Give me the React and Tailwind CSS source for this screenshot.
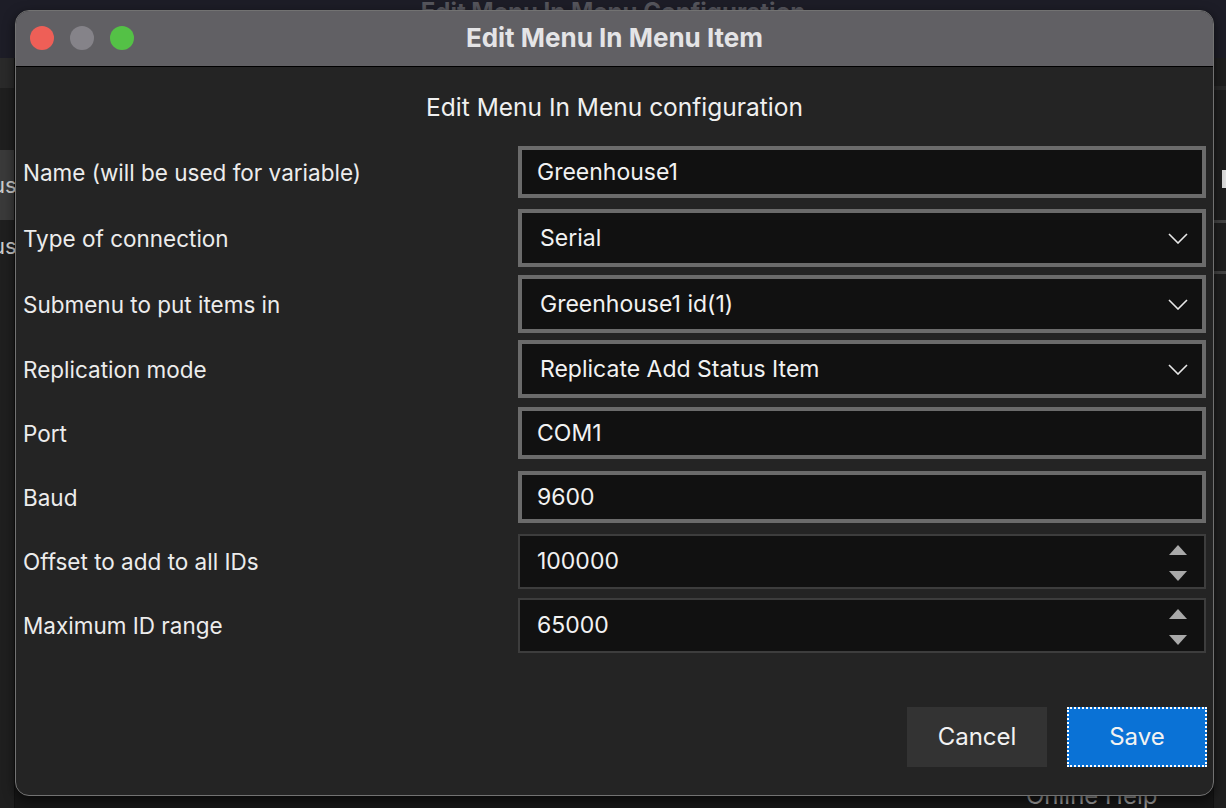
import React from "react";

const rows = [
  { label: "Name (will be used for variable)", value: "Greenhouse1", kind: "text", h: "h-[66px]" },
  { label: "Type of connection", value: "Serial", kind: "combo", h: "h-[66px]" },
  { label: "Submenu to put items in", value: "Greenhouse1 id(1)", kind: "combo", h: "h-[66px]" },
  { label: "Replication mode", value: "Replicate Add Status Item", kind: "combo", h: "h-[64px]" },
  { label: "Port", value: "COM1", kind: "text", h: "h-[64px]" },
  { label: "Baud", value: "9600", kind: "text", h: "h-[64px]" },
  { label: "Offset to add to all IDs", value: "100000", kind: "spin", h: "h-[64px]" },
  { label: "Maximum ID range", value: "65000", kind: "spin", h: "h-[64px]" },
];

function Chevron() {
  return (
    <svg width="20" height="11" viewBox="0 0 20 11" className="shrink-0">
      <polyline points="1,1 10,10 19,1" fill="none" stroke="#e8e8e8" strokeWidth="1.6" />
    </svg>
  );
}

function Spinner() {
  return (
    <div className="flex flex-col items-center gap-[16px] mt-[3px] shrink-0">
      <svg width="18" height="10" viewBox="0 0 18 10">
        <polygon points="9,0 18,10 0,10" fill="#a9a9a9" />
      </svg>
      <svg width="18" height="10" viewBox="0 0 18 10">
        <polygon points="0,0 18,0 9,10" fill="#a9a9a9" />
      </svg>
    </div>
  );
}

function Field({ row }) {
  if (row.kind === "spin") {
    return (
      <div className="flex items-center h-[55px] bg-[#111111] border-2 border-[#3d3d3d] pl-[17px] pr-[17px]">
        <span className="flex-1">{row.value}</span>
        <Spinner />
      </div>
    );
  }
  if (row.kind === "combo") {
    return (
      <div className="flex items-center h-[58px] bg-[#111111] border-4 border-[#6b6b6b] pl-[18px] pr-[14px]">
        <span className="flex-1">{row.value}</span>
        <Chevron />
      </div>
    );
  }
  return (
    <div className="flex items-center h-[52px] bg-[#111111] border-4 border-[#6b6b6b] pl-[15px]">
      <span>{row.value}</span>
    </div>
  );
}

export default function App() {
  return (
    <div
      className="relative w-[1226px] h-[808px] overflow-hidden bg-[#161616] text-[#f2f2f2]"
      style={{ fontFamily: "Inter, 'Liberation Sans', sans-serif" }}
    >
      {/* window behind */}
      <div className="absolute left-0 top-0 w-full h-[58px] bg-[#1d1d27] flex justify-center">
        <span className="text-[24px] font-bold text-[#55555c] -mt-[6px]">
          Edit Menu In Menu Configuration
        </span>
      </div>
      <div className="absolute left-0 top-[58px] w-[15px] h-[750px] bg-[#1f1f1f] border-r border-[#111]">
        <div className="h-[30px] bg-[#2a2a2a]" />
        <div className="mt-[62px] h-[70px] bg-[#3a3a3a] text-[22px] text-[#cfcfcf] flex items-center -ml-[8px]">us</div>
        <div className="mt-[10px] text-[22px] text-[#cfcfcf] -ml-[8px]">us</div>
      </div>
      <div className="absolute right-0 top-[58px] w-[13px] h-[750px] bg-[#1f1f1f] border-l border-[#111]">
        <div className="mt-[28px] h-[4px] bg-[#2a2a2a]" />
        <div className="mt-[80px] ml-[8px] w-[6px] h-[18px] bg-[#dcdcdc]" />
        <div className="mt-[32px] h-[3px] bg-[#444]" />
        <div className="mt-[48px] h-[3px] bg-[#444]" />
      </div>
      <div className="absolute left-[1026px] top-[778px] text-[24px] text-[#9a9a9a]">Online Help</div>

      {/* dialog */}
      <div className="absolute left-[15px] top-[10px] w-[1199px] h-[786px] rounded-[14px] overflow-hidden border border-[#727272] bg-[#242424] flex flex-col shadow-[0_4px_12px_rgba(0,0,0,0.6)]">
        <div className="relative h-[56px] bg-[#616064] border-b border-black flex items-center justify-center shrink-0">
          <div className="absolute left-[14px] top-[15px] flex gap-[16px]">
            <span className="w-[24px] h-[24px] rounded-full bg-[#ee5f57]" />
            <span className="w-[24px] h-[24px] rounded-full bg-[#858389]" />
            <span className="w-[24px] h-[24px] rounded-full bg-[#54c146]" />
          </div>
          <span className="text-[26px] font-bold text-[#e4e4e6] -mt-[2px]">Edit Menu In Menu Item</span>
        </div>

        <div className="pt-[26px] h-[28px] box-content mb-[18px] text-center text-[24.5px] leading-[28px] text-[#f0f0f0]">
          Edit Menu In Menu configuration
        </div>

        <div className="flex flex-col pl-[7px] pr-[7px] text-[22.5px] text-[#ececec]">
          {rows.map((r) => (
            <div key={r.label} className={"flex items-center " + r.h}>
              <div className="w-[495px] shrink-0 pt-[2px]">{r.label}</div>
              <div className="flex-1 text-[23px] text-[#f2f2f2]">
                <Field row={r} />
              </div>
            </div>
          ))}
        </div>

        <div className="mt-auto flex justify-end gap-[20px] pr-[6px] pb-[28px] text-[24px]">
          <div className="w-[140px] h-[60px] bg-[#333333] flex items-center justify-center">Cancel</div>
          <div className="w-[140px] h-[60px] bg-[#0a72d6] border-2 border-dotted border-white flex items-center justify-center">
            Save
          </div>
        </div>
      </div>
    </div>
  );
}
